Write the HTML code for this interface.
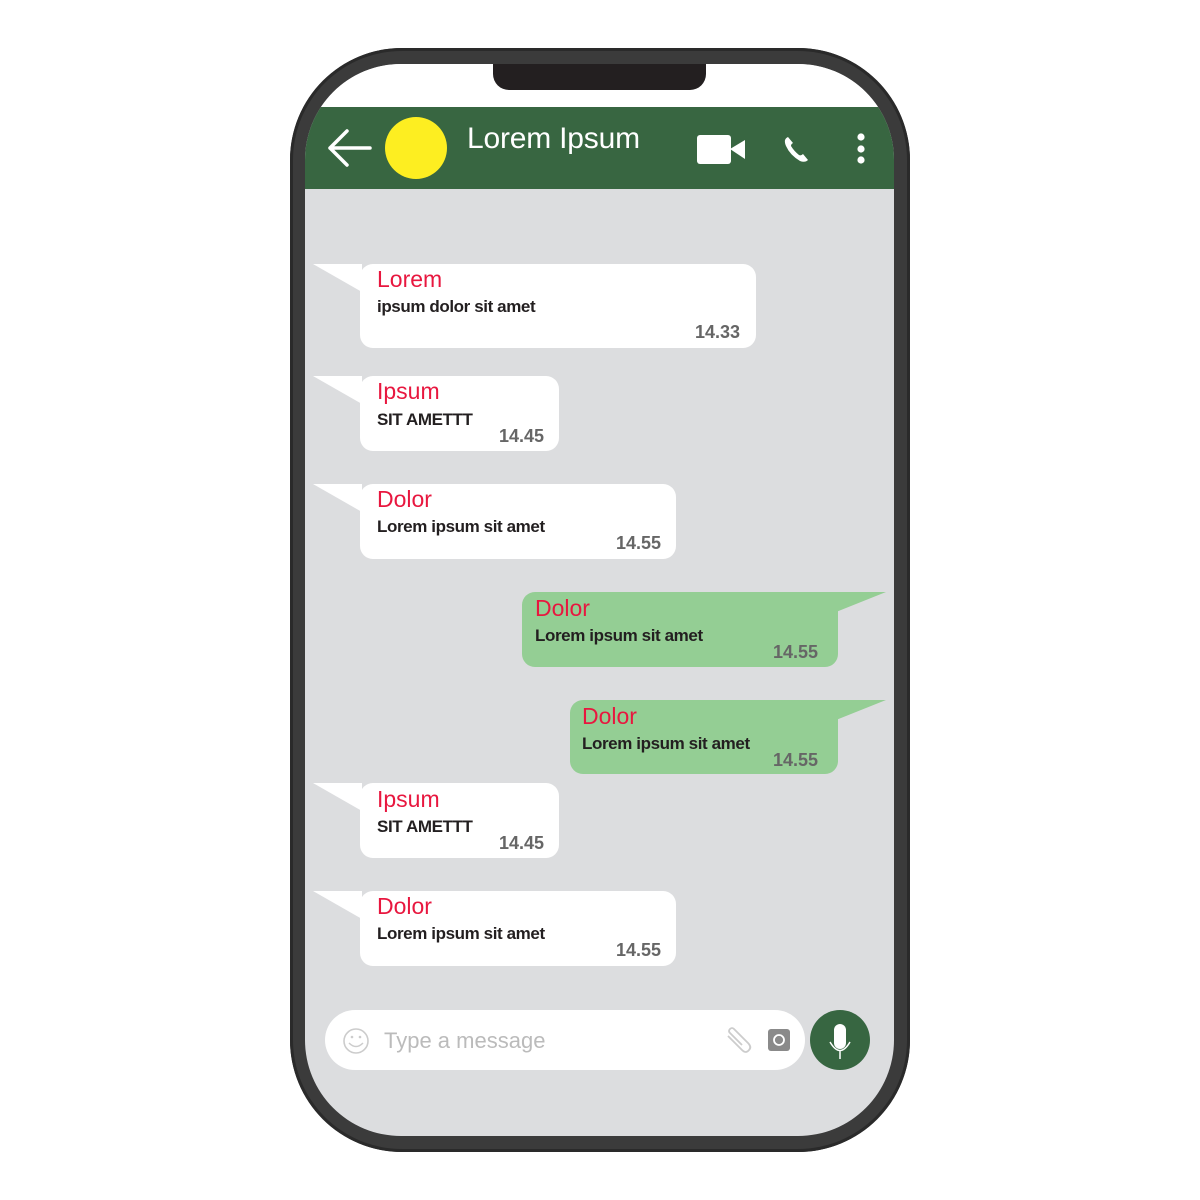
<!DOCTYPE html>
<html><head><style>
*{margin:0;padding:0;box-sizing:border-box}
body{width:1200px;height:1200px;background:#fff;position:relative;overflow:hidden;font-family:"Liberation Sans",sans-serif}
.phone{position:absolute;left:290px;top:48px;width:620px;height:1104px;border-radius:112px;background:#3b3b3b;box-shadow:inset 0 0 0 3px #2a2a2a}
.screen{position:absolute;left:305px;top:64px;width:589px;height:1072px;border-radius:96px;background:#dcdddf;overflow:hidden}
.status{position:absolute;left:0;top:0;width:589px;height:43px;background:#fff}
.notch{position:absolute;left:188px;top:0;width:213px;height:26px;background:#231f20;border-radius:0 0 16px 16px}
.header{position:absolute;left:0;top:43px;width:589px;height:82px;background:#386641}
.b{position:absolute;border-radius:13px}
.w{background:#fff}.g{background:#94ce94}
.t{position:absolute;color:#e8173f;font-size:23px;line-height:26px}
.m{position:absolute;color:#231f20;font-size:17px;line-height:20px;font-weight:bold;letter-spacing:-0.4px}
.tm{position:absolute;color:#666;font-size:18px;line-height:20px;font-weight:bold;text-align:right}
</style></head><body>
<div class="phone"></div>
<div class="screen">
 <div class="status"></div><div class="notch"></div>
 <div class="header"></div>
</div>
<svg style="position:absolute;left:0;top:0" width="1200" height="1200">
 <path d="M347 131 L330 148 L347 165 M330 148 H370" stroke="#fff" stroke-width="3.5" fill="none" stroke-linecap="round" stroke-linejoin="round"/>
 <ellipse cx="416" cy="148" rx="31" ry="31" fill="#fdee21"/>
 <rect x="697" y="135" width="34" height="29" rx="3" fill="#fff"/>
 <path d="M730 149 L745 140 V159 Z" fill="#fff"/>
 <path d="M788 137 q-5 2 -2 9 q4 9 14 15 q5 2 8 -1 l-5 -6 q-2 2 -4 1 q-5 -4 -8 -9 q0 -2 2 -3 z" fill="#fff"/>
 <circle cx="861" cy="137" r="3.6" fill="#fff"/><circle cx="861" cy="149" r="3.6" fill="#fff"/><circle cx="861" cy="160" r="3.6" fill="#fff"/>
 <g fill="#fff">
 <path d="M313 264 L362 264 L362 292 Z"/><path d="M313 376 L362 376 L362 404 Z"/><path d="M313 484 L362 484 L362 512 Z"/>
 <path d="M313 783 L362 783 L362 811 Z"/><path d="M313 891 L362 891 L362 919 Z"/>
 </g>
 <g fill="#94ce94">
 <path d="M886 592 L836 592 L836 612 Z"/><path d="M886 700 L836 700 L836 720 Z"/>
 </g>
 <rect x="325" y="1010" width="480" height="60" rx="30" fill="#fff"/>
 <circle cx="356" cy="1041" r="12" stroke="#ccc" stroke-width="1.6" fill="none"/>
 <circle cx="352" cy="1037" r="1.3" fill="#ccc"/><circle cx="360" cy="1037" r="1.3" fill="#ccc"/>
 <path d="M349 1043 q7 7 14 0" stroke="#ccc" stroke-width="1.5" fill="none"/>
 <path d="M728 1036 l14 14 q4 4 7 0 q3 -3 -1 -7 l-14 -14 q-2 -2 -4 0 q-2 2 0 4 l12 12" stroke="#ccc" stroke-width="1.8" fill="none"/>
 <rect x="768" y="1029" width="22" height="22" rx="3" fill="#8a8a8a"/>
 <circle cx="779" cy="1040" r="5" stroke="#fff" stroke-width="1.8" fill="none"/>
 <circle cx="840" cy="1040" r="30" fill="#376641"/>
 <rect x="834" y="1024" width="12" height="25" rx="6" fill="#fff"/>
 <path d="M830 1042 q10 17 20 0 M840 1051 v8" stroke="#fff" stroke-width="1.5" fill="none"/>
</svg>
<div style="position:absolute;left:467px;top:121px;color:#fff;font-size:30px;line-height:36px;letter-spacing:-0.2px">Lorem Ipsum</div>

<div class="b w" style="left:360px;top:264px;width:396px;height:84px"></div>
<div class="t" style="left:377px;top:266px">Lorem</div>
<div class="m" style="left:377px;top:297px">ipsum dolor sit amet</div>
<div class="tm" style="left:640px;top:322px;width:100px">14.33</div>

<div class="b w" style="left:360px;top:376px;width:199px;height:75px"></div>
<div class="t" style="left:377px;top:378px">Ipsum</div>
<div class="m" style="left:377px;top:410px">SIT AMETTT</div>
<div class="tm" style="left:444px;top:426px;width:100px">14.45</div>

<div class="b w" style="left:360px;top:484px;width:316px;height:75px"></div>
<div class="t" style="left:377px;top:486px">Dolor</div>
<div class="m" style="left:377px;top:517px">Lorem ipsum sit amet</div>
<div class="tm" style="left:561px;top:533px;width:100px">14.55</div>

<div class="b g" style="left:522px;top:592px;width:316px;height:75px;border-top-right-radius:0"></div>
<div class="t" style="left:535px;top:595px">Dolor</div>
<div class="m" style="left:535px;top:626px">Lorem ipsum sit amet</div>
<div class="tm" style="left:718px;top:642px;width:100px">14.55</div>

<div class="b g" style="left:570px;top:700px;width:268px;height:74px;border-top-right-radius:0"></div>
<div class="t" style="left:582px;top:703px">Dolor</div>
<div class="m" style="left:582px;top:734px">Lorem ipsum sit amet</div>
<div class="tm" style="left:718px;top:750px;width:100px">14.55</div>

<div class="b w" style="left:360px;top:783px;width:199px;height:75px"></div>
<div class="t" style="left:377px;top:786px">Ipsum</div>
<div class="m" style="left:377px;top:817px">SIT AMETTT</div>
<div class="tm" style="left:444px;top:833px;width:100px">14.45</div>

<div class="b w" style="left:360px;top:891px;width:316px;height:75px"></div>
<div class="t" style="left:377px;top:893px">Dolor</div>
<div class="m" style="left:377px;top:924px">Lorem ipsum sit amet</div>
<div class="tm" style="left:561px;top:940px;width:100px">14.55</div>

<div style="position:absolute;left:384px;top:1028px;color:#bbb;font-size:22px;line-height:26px">Type a message</div>
</body></html>
